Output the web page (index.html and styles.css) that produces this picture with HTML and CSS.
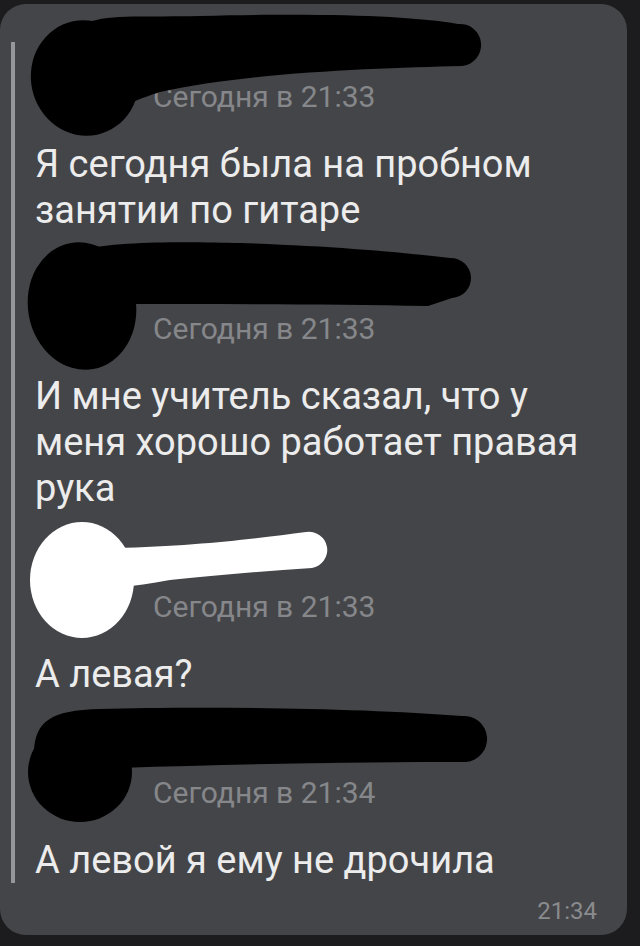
FILE: index.html
```html
<!DOCTYPE html>
<html lang="ru">
<head>
  <meta charset="UTF-8">
  <meta name="viewport" content="width=device-width, initial-scale=1.0">
  <title>Пересланные сообщения</title>
  <link rel="stylesheet" href="styles.css">
</head>
<body>

  <div class="bubble">
    <div class="quote">

      <div class="msg">
        <div class="msg-name"></div>
        <div class="msg-time">Сегодня в 21:33</div>
        <p class="msg-text">Я сегодня была на пробном занятии по гитаре</p>
      </div>

      <div class="msg">
        <div class="msg-name"></div>
        <div class="msg-time">Сегодня в 21:33</div>
        <p class="msg-text">И мне учитель сказал, что у меня хорошо работает правая рука</p>
      </div>

      <div class="msg">
        <div class="msg-name"></div>
        <div class="msg-time">Сегодня в 21:33</div>
        <p class="msg-text">А левая?</p>
      </div>

      <div class="msg">
        <div class="msg-name"></div>
        <div class="msg-time">Сегодня в 21:34</div>
        <p class="msg-text">А левой я ему не дрочила</p>
      </div>

    </div>
    <div class="bubble-time">21:34</div>
  </div>

  <!-- scribbled-over avatars and names -->
  <svg class="scribbles" viewBox="0 0 640 946" width="640" height="946">
    <g fill="#000">
      <ellipse cx="85" cy="78" rx="54" ry="58" transform="rotate(-12 85 78)"/>
      <path d="M 60 40 C 90 10, 120 18, 200 16 C 330 13, 410 16, 458 24 A 21 21 0 0 1 462 66 C 380 68, 250 72, 160 92 C 140 98, 130 105, 100 110 Z"/>

      <ellipse cx="82" cy="306" rx="54" ry="64" transform="rotate(-10 82 306)"/>
      <path d="M 80 250 C 120 240, 200 242, 240 243 C 330 246, 400 252, 450 258 A 20 20 0 0 1 452 298 L 428 306 C 330 304, 220 304, 110 304 Z"/>

      <ellipse cx="80" cy="772" rx="52" ry="50"/>
      <path d="M 34 750 C 36 722, 50 710, 100 709 C 200 706, 360 708, 462 716 A 23 23 0 0 1 466 762 C 360 762, 240 764, 120 768 Z"/>
    </g>
    <g fill="#fff">
      <ellipse cx="82" cy="580" rx="52" ry="58"/>
      <path d="M 115 548 C 200 546, 260 538, 306 532 A 18 18 0 0 1 312 568 C 262 571, 210 576, 170 580 C 150 584, 135 585, 120 588 Z"/>
    </g>
  </svg>

</body>
</html>
```

FILE: styles.css
```css
/* Reset */
body, p, div {
    margin: 0;
    padding: 0;
}

body {
    background-color: #1c1c1e;
    font-family: Roboto, "Liberation Sans", sans-serif;
    width: 640px;
    height: 946px;
    overflow: hidden;
    position: relative;
}

/* Message bubble */
.bubble {
    margin: 4px 13px 0 0;
    height: 931px;
    box-sizing: border-box;
    background-color: #444548;
    border-radius: 26px;
    padding: 38px 0 0 11px;
}

/* Forwarded messages block with grey line on the left */
.quote {
    border-left: 4px solid #96979a;
    padding-left: 20px;
}

.msg + .msg {
    margin-top: 41px;
}

.msg-name {
    height: 40px;
}

.msg-time {
    font-size: 30px;
    line-height: 30px;
    color: #86878a;
    padding-left: 118px;
}

.msg-text {
    margin-top: 29px;
    font-size: 38px;
    line-height: 46px;
    color: #ececec;
    padding-right: 40px;
}

.bubble-time {
    text-align: right;
    font-size: 24px;
    line-height: 28px;
    color: #8a8b8e;
    padding-right: 30px;
    margin-top: 14px;
}

/* Scribbles sit over the names */
.scribbles {
    position: absolute;
    top: 0;
    left: 0;
}
```
